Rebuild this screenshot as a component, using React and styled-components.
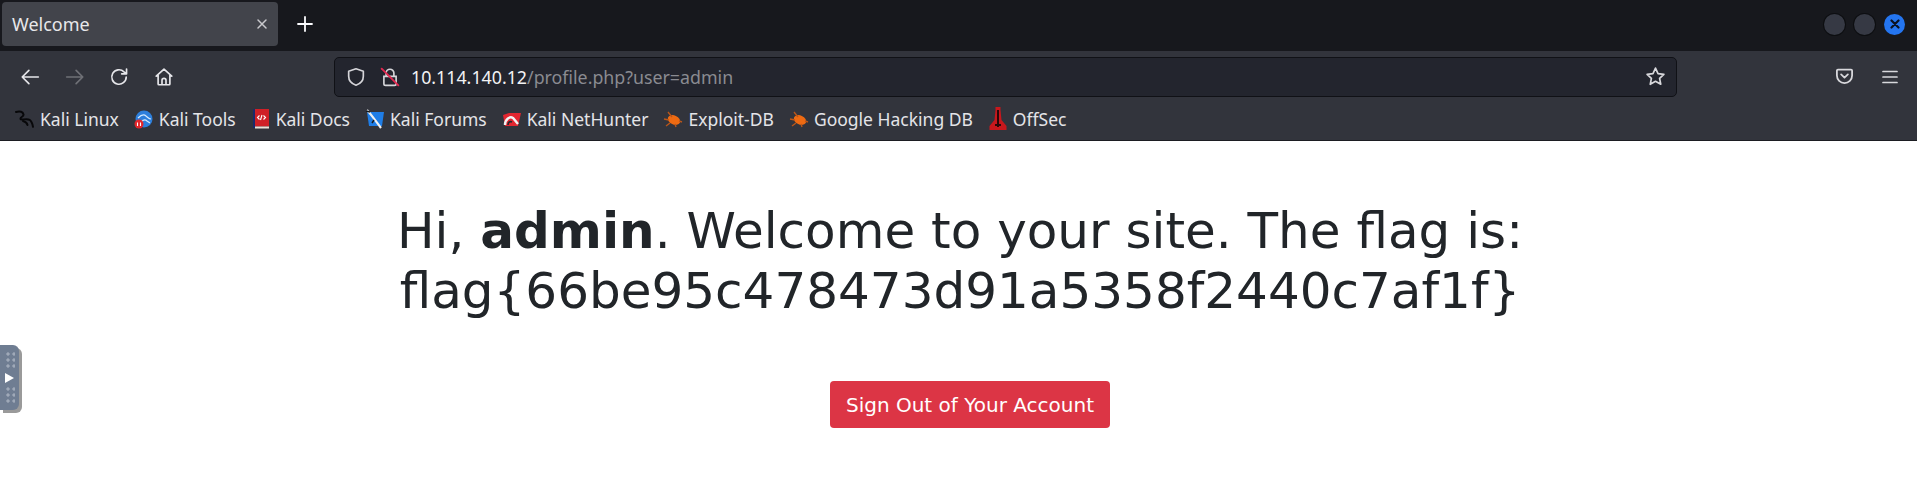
import React from 'react';
import styled, { createGlobalStyle } from 'styled-components';

const GlobalStyle = createGlobalStyle`
  html, body {
    margin: 0;
    padding: 0;
    background: #fff;
    overflow: hidden;
  }
`;

const UI_FONT = `"Noto Sans", "Open Sans", sans-serif`;

const App = () => (
  <Page>
    <GlobalStyle />
    <TabStrip>
      <Tab>
        <TabTitle>Welcome</TabTitle>
        <Glyph size={14} color="#c9c9cd"><path d="M3 3l8 8M11 3l-8 8" /></Glyph>
      </Tab>
      <NewTab>
        <Glyph size={16} color="#fbfbfe" width={1.8}><path d="M8 1v14M1 8h14" /></Glyph>
      </NewTab>
      <WindowButtons>
        <WindowDot />
        <WindowDot />
        <CloseDot>
          <svg width="10" height="10" viewBox="0 0 10 10" fill="none" stroke="#0b1220" strokeWidth="2.2" strokeLinecap="round">
            <path d="M1.5 1.5l7 7M8.5 1.5l-7 7" />
          </svg>
        </CloseDot>
      </WindowButtons>
    </TabStrip>

    <NavBar>
      <NavButtons>
        <NavIcon><Glyph size={20} box={18} color="#e6e6ea"><path d="M16.5 9H2M8 3L2 9l6 6" /></Glyph></NavIcon>
        <NavIcon><Glyph size={20} box={18} color="#6f7076"><path d="M1.5 9H16M10 3l6 6-6 6" /></Glyph></NavIcon>
        <NavIcon><Glyph size={20} box={18} color="#e6e6ea"><path d="M15.5 9a6.5 6.5 0 1 1-2-4.7L15.5 6M15.8 1.8V6.2h-4.4" /></Glyph></NavIcon>
        <NavIcon><Glyph size={20} box={18} color="#e6e6ea"><path d="M2 8.2L9 2l7 6.2M3.7 7v8.3a.7.7 0 0 0 .7.7h9.2a.7.7 0 0 0 .7-.7V7M7.2 16v-4a1.8 1.8 0 0 1 3.6 0v4" /></Glyph></NavIcon>
      </NavButtons>
      <UrlField>
        <ShieldSlot>
          <Glyph size={20} box={18} color="#d5d5d9"><path d="M9 1.6l6.6 2.2v4.6c0 4-2.8 6.8-6.6 8-3.8-1.2-6.6-4-6.6-8V3.800z" /></Glyph>
        </ShieldSlot>
        <LockSlot>
          <svg width="20" height="20" viewBox="0 0 18 18" fill="none" strokeLinecap="round">
            <path d="M5.500 8V5.500a3.500 3.500 0 0 1 7 0V8M3.500 8.500h11v6.500a1.500 1.500 0 0 1-1.500 1.500H5a1.500 1.500 0 0 1-1.500-1.500z" stroke="#d5d5d9" strokeWidth="1.5" />
            <path d="M1.500 1.500l15 15" stroke="#e22850" strokeWidth="1.7" />
          </svg>
        </LockSlot>
        <UrlText>
          <UrlHost>10.114.140.12</UrlHost>/profile.php?user=admin
        </UrlText>
        <Glyph size={21} box={20} color="#d8d8dc" width={1.6}>
          <path d="M10 2l2.400 5.200 5.600.7-4.100 3.900 1.100 5.600-5-2.800-5 2.800 1.100-5.600L2 7.900l5.600-.7z" />
        </Glyph>
      </UrlField>
      <NavEnd>
        <Glyph size={19} box={18} color="#d8d8dc" width={1.7}>
          <path d="M2.800 2.500h12.400a1 1 0 0 1 1 1V8a7.200 7.200 0 0 1-14.400 0V3.500a1 1 0 0 1 1-1zM5.800 7L9 10l3.200-3" />
        </Glyph>
        <Glyph size={18} color="#d8d8dc" width={1.7}>
          <path d="M2 3.500h14M2 9h14M2 14.500h14" />
        </Glyph>
      </NavEnd>
    </NavBar>

    <BookmarksBar>
      <Bookmark><IconSlot><KaliIcon /></IconSlot><span>Kali Linux</span></Bookmark>
      <Bookmark><IconSlot><ToolsIcon /></IconSlot><span>Kali Tools</span></Bookmark>
      <Bookmark><IconSlot><DocsIcon /></IconSlot><span>Kali Docs</span></Bookmark>
      <Bookmark><IconSlot><ForumsIcon /></IconSlot><span>Kali Forums</span></Bookmark>
      <Bookmark><IconSlot><NetHunterIcon /></IconSlot><span>Kali NetHunter</span></Bookmark>
      <Bookmark><IconSlot><BugIcon /></IconSlot><span>Exploit-DB</span></Bookmark>
      <Bookmark><IconSlot><BugIcon /></IconSlot><span>Google Hacking DB</span></Bookmark>
      <Bookmark><IconSlot><OffSecIcon /></IconSlot><span>OffSec</span></Bookmark>
    </BookmarksBar>

    <Content>
      <Heading>
        Hi, <b>admin</b>. Welcome to your site. The flag is:<br />
        flag{'{'}66be95c478473d91a5358f2440c7af1f{'}'}
      </Heading>
      <SignOut>Sign Out of Your Account</SignOut>
    </Content>

    <SideHandle>
      <HandleDots />
      <svg width="9" height="10" viewBox="0 0 9 10"><path d="M0 0l9 5-9 5z" fill="#fff" /></svg>
      <HandleDots />
    </SideHandle>
  </Page>
);

export default App;

const Glyph = ({ size, box = size, color, width = 1.5, children }) => (
  <svg width={size} height={size} viewBox={`0 0 ${box} ${box}`} fill="none" stroke={color} strokeWidth={width} strokeLinecap="round" strokeLinejoin="round">
    {children}
  </svg>
);

const KaliIcon = () => (
  <svg width="20" height="18" viewBox="0 0 20 18" fill="none" stroke="#08080a" strokeWidth="2" strokeLinecap="round">
    <path d="M1 2c4-1.500 7 0 7.500 2.500C9 7 5 6.500 5.500 9c.5 1.800 6-1.200 9 .8 2 1.400 3 4 3.500 7" />
    <path d="M8 11c2 .5 4 2 4.500 4" />
  </svg>
);

const ToolsIcon = () => (
  <svg width="19" height="19" viewBox="0 0 19 19">
    <circle cx="10" cy="9" r="8.500" fill="#2d7fdc" />
    <path d="M4 8c3-3 6-4 8-2 2 1.500 3 3 5 3M7 12c2-2 4-3 6-1l3 2" fill="none" stroke="#d8ecff" strokeWidth="1.200" />
    <circle cx="5" cy="14" r="4.500" fill="#e2252b" />
    <path d="M3.500 12.500v3.500M6.500 12.500v3.500" stroke="#fff" strokeWidth="1.100" />
  </svg>
);

const DocsIcon = () => (
  <svg width="16" height="20" viewBox="0 0 16 20">
    <rect x="0" y="0" width="3" height="19" fill="#1b2a6b" />
    <rect x="2" y="0" width="14" height="17.500" fill="#cf2027" />
    <rect x="2" y="17.500" width="14" height="2" fill="#e9e2d8" />
    <path d="M6.500 6.500L4.500 8.500l2 2M10.500 6.500l2 2-2 2M9 6l-1.500 5" fill="none" stroke="#fff" strokeWidth="1.100" />
  </svg>
);

const ForumsIcon = () => (
  <svg width="20" height="20" viewBox="0 0 20 20">
    <path d="M2 3h17l-2 14H4z" fill="#1f7de6" />
    <path d="M2 1c3 3 8 10 14 18" fill="none" stroke="#f0f0f0" strokeWidth="2.200" />
    <path d="M1 2l4 1M9 11l-2 3" fill="none" stroke="#15181c" strokeWidth="1.500" />
  </svg>
);

const NetHunterIcon = () => (
  <svg width="20" height="18" viewBox="0 0 20 18">
    <path d="M1 5L7 3h12l-3 13H3z" fill="#e22630" />
    <path d="M3 15c0-6 5-9 8-7l5 6" fill="none" stroke="#f2f2f2" strokeWidth="2.400" />
    <path d="M6 15c0-3 2-4 4-3" fill="none" stroke="#25272c" strokeWidth="1.600" />
  </svg>
);

const BugIcon = () => (
  <svg width="20" height="18" viewBox="0 0 20 18">
    <ellipse cx="11" cy="10" rx="6.500" ry="4.500" transform="rotate(25 11 10)" fill="#ee6a12" />
    <path d="M5 2l4 5M1 9l5 1M3 16l4-3M12 14l1 3M16 11l3 1" stroke="#b9561a" strokeWidth="1.400" />
  </svg>
);

const OffSecIcon = () => (
  <svg width="18" height="24" viewBox="0 0 18 24">
    <path d="M6.500 0h5v3l1 10 5 6v4H.5v-4l5-6 1-10z" fill="#c8171c" />
    <path d="M9 3v17M6 18h6" stroke="#2b0708" strokeWidth="2" />
  </svg>
);

const Page = styled.div`
  position: relative;
  width: 1917px;
  height: 477px;
  overflow: hidden;
  display: flex;
  flex-direction: column;
  background: #fff;
`;

const TabStrip = styled.div`
  height: 51px;
  box-sizing: border-box;
  padding: 2px 12px 5px 2px;
  display: flex;
  align-items: stretch;
  background: #17181d;
`;

const Tab = styled.div`
  width: 276px;
  box-sizing: border-box;
  padding: 0 9px 0 10px;
  display: flex;
  align-items: center;
  justify-content: space-between;
  background: #42444b;
  border-radius: 4px;
`;

const TabTitle = styled.span`
  font: 18px ${UI_FONT};
  color: #e8e8ea;
`;

const NewTab = styled.div`
  width: 54px;
  display: flex;
  align-items: center;
  justify-content: center;
`;

const WindowButtons = styled.div`
  margin-left: auto;
  display: flex;
  align-items: center;
  gap: 9px;
`;

const WindowDot = styled.div`
  width: 21px;
  height: 21px;
  border-radius: 50%;
  background: #363944;
  box-shadow: 0 0 0 1px #0d0e11;
`;

const CloseDot = styled(WindowDot)`
  display: flex;
  align-items: center;
  justify-content: center;
  background: #2475f0;
  box-shadow: none;
`;

const NavBar = styled.div`
  height: 47px;
  box-sizing: border-box;
  padding: 4px 18px 0 20px;
  display: flex;
  align-items: center;
  background: #32343c;
`;

const NavButtons = styled.div`
  width: 314px;
  display: flex;
  align-items: center;
  gap: 24.500px;
`;

const NavIcon = styled.div`
  display: flex;
  width: 20px;
`;

const UrlField = styled.div`
  width: 1343px;
  height: 40px;
  box-sizing: border-box;
  padding: 0 10px 0 11px;
  display: flex;
  align-items: center;
  background: #23252e;
  border: 1px solid #101116;
  border-radius: 5px;
`;

const ShieldSlot = styled.div`
  display: flex;
  width: 34px;
`;

const LockSlot = styled.div`
  display: flex;
  width: 31px;
`;

const UrlText = styled.div`
  flex: 1;
  font: 17.800px ${UI_FONT};
  color: #8a8b91;
`;

const UrlHost = styled.span`
  color: #f2f2f4;
`;

const NavEnd = styled.div`
  margin-left: auto;
  display: flex;
  align-items: center;
  gap: 27px;
`;

const BookmarksBar = styled.div`
  height: 43px;
  box-sizing: border-box;
  padding-left: 16px;
  display: flex;
  align-items: center;
  gap: 16px;
  background: #32343c;
  border-bottom: 1px solid #1c1d22;
`;

const Bookmark = styled.div`
  display: flex;
  align-items: center;
  gap: 6px;
  font: 17.500px ${UI_FONT};
  color: #e4e4e8;
  white-space: nowrap;
`;

const IconSlot = styled.div`
  width: 18px;
  height: 20px;
  display: flex;
  align-items: center;
  justify-content: center;
  svg {
    flex: none;
  }
`;

const Content = styled.div`
  flex: 1;
  padding-top: 60px;
  display: flex;
  flex-direction: column;
  align-items: center;
`;

const Heading = styled.h1`
  margin: 0 0 60px 3px;
  font: 400 50px/60px "DejaVu Sans", sans-serif;
  color: #212529;
  text-align: center;
  b {
    font-weight: 700;
  }
`;

const SignOut = styled.button`
  width: 280px;
  height: 47px;
  margin-left: 23px;
  padding: 0;
  font: 400 20px "DejaVu Sans", sans-serif;
  color: #fff;
  background: #dc3545;
  border: 0;
  border-radius: 4px;
`;

const SideHandle = styled.div`
  position: absolute;
  left: 0;
  top: 345px;
  width: 19px;
  height: 65px;
  display: flex;
  flex-direction: column;
  align-items: center;
  justify-content: space-between;
  padding: 6px 0;
  box-sizing: border-box;
  background: #6f7d92;
  border-radius: 0 6px 6px 0;
  box-shadow: 3px 3px 0 #9a9a9a;
`;

const HandleDots = styled.div`
  width: 10px;
  height: 18px;
  background-image: radial-gradient(#9fa9b8 1.500px, transparent 1.700px);
  background-size: 6px 6px;
`;
